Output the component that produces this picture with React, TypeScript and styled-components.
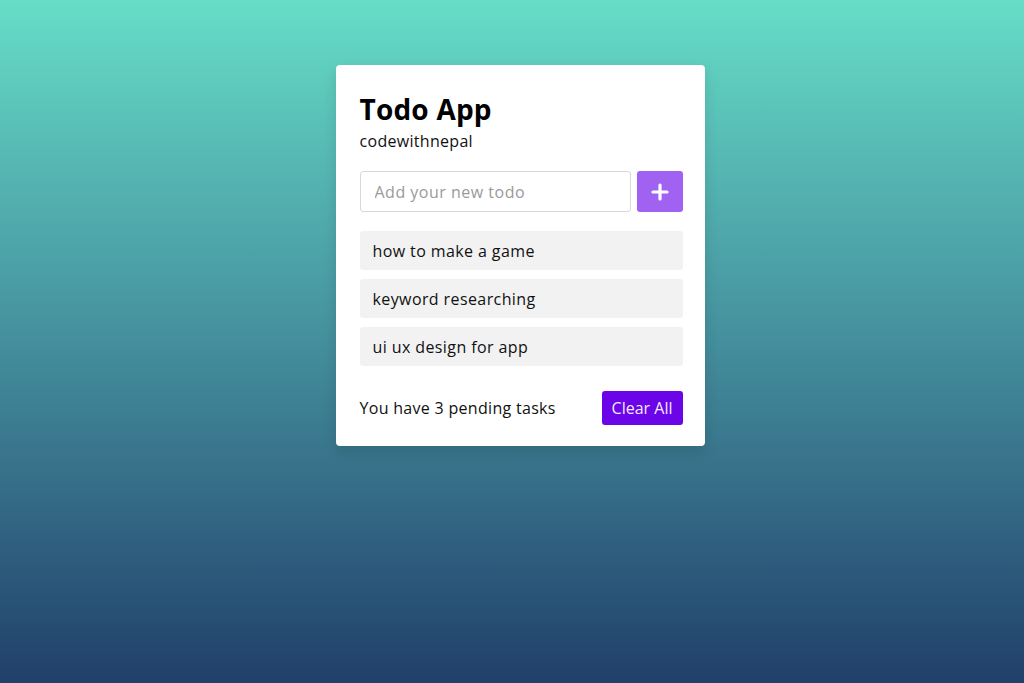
import React, { useState } from 'react';
import styled, { createGlobalStyle } from 'styled-components';

const GlobalStyle = createGlobalStyle`
  * {
    box-sizing: border-box;
    margin: 0;
    padding: 0;
  }
  html, body {
    height: 100%;
  }
  body {
    font-family: 'Open Sans', 'Noto Sans', sans-serif;
  }
`;

const Page = styled.div`
  min-height: 683px;
  background: linear-gradient(to bottom, #66ddc7 0%, #448f9d 50%, #213f6a 100%);
  display: flex;
  justify-content: center;
  align-items: flex-start;
  padding: 65px 0 0 16px;
`;

const Card = styled.div`
  width: 369px;
  background: #fff;
  border-radius: 4px;
  padding: 24px 22px 21px 24px;
  box-shadow: 0 6px 14px rgba(0, 0, 0, 0.12);
`;

const Title = styled.h1`
  font-size: 28px;
  font-weight: 700;
  color: #000;
  line-height: 40px;
  letter-spacing: 0.2px;
`;

const Subtitle = styled.p`
  font-size: 16px;
  letter-spacing: 0.3px;
  color: #111;
  line-height: 22px;
  margin-top: 1px;
`;

const InputRow = styled.div`
  display: flex;
  gap: 6px;
  margin-top: 19px;
  height: 41px;
`;

const TodoInput = styled.input`
  flex: 1;
  min-width: 0;
  border: 1px solid #d8d8d8;
  border-radius: 3px;
  padding: 0 14px;
  font-family: inherit;
  font-size: 16px;
  letter-spacing: 0.5px;
  color: #222;
  outline: none;

  &::placeholder {
    color: #9a9a9a;
  }
`;

const AddButton = styled.button`
  width: 46px;
  border: none;
  border-radius: 3px;
  background: #a262f1;
  color: #fff;
  display: flex;
  align-items: center;
  justify-content: center;
  cursor: pointer;
`;

const List = styled.ul`
  list-style: none;
  display: flex;
  flex-direction: column;
  gap: 9px;
  margin-top: 19px;
`;

const Item = styled.li`
  height: 39px;
  background: #f2f2f2;
  border-radius: 3px;
  padding: 0 13px;
  display: flex;
  align-items: center;
  font-size: 16px;
  letter-spacing: 0.4px;
  color: #111;
`;

const Footer = styled.div`
  display: flex;
  align-items: center;
  justify-content: space-between;
  margin-top: 25px;
`;

const Pending = styled.span`
  font-size: 16px;
  letter-spacing: 0.3px;
  color: #111;
`;

const ClearButton = styled.button`
  height: 34px;
  padding: 0 10px;
  border: none;
  border-radius: 3px;
  background: #6b04e6;
  color: #f3e9ff;
  font-family: inherit;
  font-size: 16px;
  cursor: pointer;
`;

const App: React.FC = () => {
  const [todos, setTodos] = useState<string[]>([
    'how to make a game',
    'keyword researching',
    'ui ux design for app',
  ]);
  const [text, setText] = useState('');

  const addTodo = () => {
    if (!text.trim()) return;
    setTodos([...todos, text.trim()]);
    setText('');
  };

  return (
    <>
      <GlobalStyle />
      <Page>
        <Card>
          <Title>Todo App</Title>
          <Subtitle>codewithnepal</Subtitle>
          <InputRow>
            <TodoInput
              placeholder="Add your new todo"
              value={text}
              onChange={(e) => setText(e.target.value)}
            />
            <AddButton onClick={addTodo}>
              <svg width="18" height="18" viewBox="0 0 18 18">
                <path d="M9 2v14M2 9h14" stroke="#fff" strokeWidth="3.2" strokeLinecap="round" />
              </svg>
            </AddButton>
          </InputRow>
          <List>
            {todos.map((t, i) => (
              <Item key={i}>{t}</Item>
            ))}
          </List>
          <Footer>
            <Pending>You have {todos.length} pending tasks</Pending>
            <ClearButton onClick={() => setTodos([])}>Clear All</ClearButton>
          </Footer>
        </Card>
      </Page>
    </>
  );
};

export default App;
